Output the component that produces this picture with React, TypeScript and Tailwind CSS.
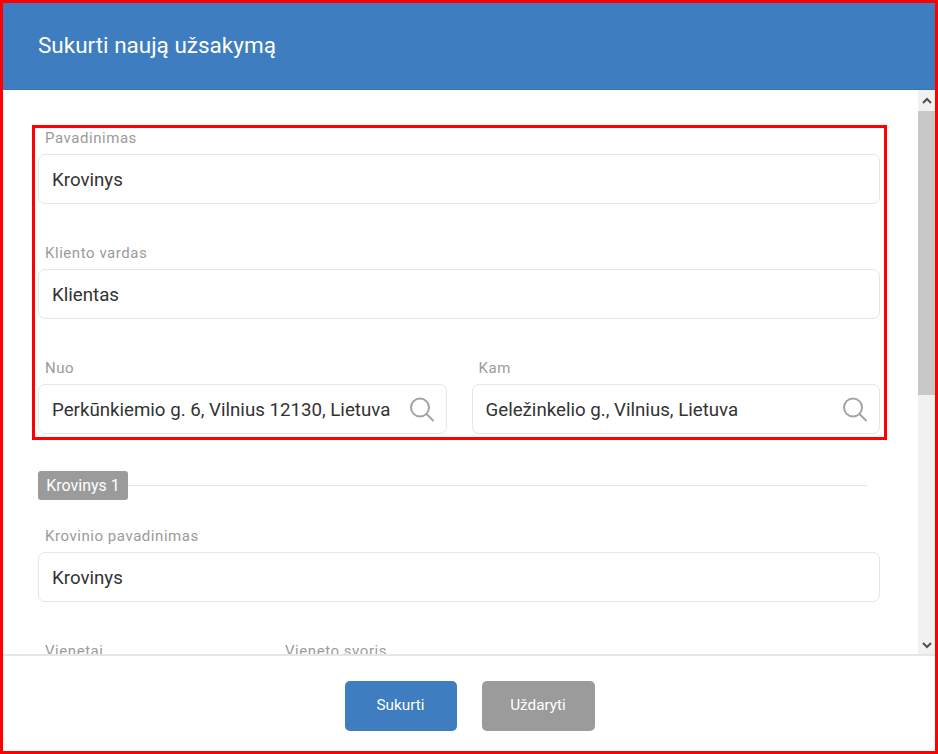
import React from 'react';

function SearchIcon() {
  return (
    <svg width="24" height="25" viewBox="0 0 24 25" fill="none" stroke="#a3a3a3" strokeWidth="2" className="shrink-0">
      <circle cx="10" cy="10.5" r="9" />
      <path d="M17 17.5l6 6" strokeLinecap="round" />
    </svg>
  );
}

function Field({ label, value, icon }: { label: string; value: string; icon?: boolean }) {
  return (
    <div className="flex-1 min-w-0">
      <label className="block pl-[7px] h-[28px] text-[15px] tracking-[0.55px] leading-[24px] text-[#9b9b9b]">{label}</label>
      <div className="flex items-center h-[50px] pl-[13px] pr-[12px] bg-white border border-[#e6e6e6] rounded-[7px]">
        <input
          readOnly
          value={value}
          className="flex-1 min-w-0 pt-[2px] bg-transparent outline-none text-[18.7px] text-[#333333]"
        />
        {icon && <SearchIcon />}
      </div>
    </div>
  );
}

export default function App() {
  return (
    <div className="relative flex flex-col h-[754px] w-[938px] overflow-hidden bg-white border-[3px] border-[#ff0000] font-['Roboto',sans-serif]">
      <header className="flex items-center h-[87px] shrink-0 pl-[35px] bg-[#3d7dc0] border-b border-[#3a75b3]">
        <h1 className="text-[22.5px] text-white">Sukurti naują užsakymą</h1>
      </header>

      <div className="flex flex-1 min-h-0">
        <div className="flex-1 min-w-0 overflow-hidden pt-[36px] pl-[35px] pr-[38px]">
          <div className="flex flex-col gap-[37px]">
            <Field label="Pavadinimas" value="Krovinys" />
            <Field label="Kliento vardas" value="Klientas" />
            <div className="flex gap-[25px]">
              <Field label="Nuo" value="Perkūnkiemio g. 6, Vilnius 12130, Lietuva" icon />
              <Field label="Kam" value="Geležinkelio g., Vilnius, Lietuva" icon />
            </div>
          </div>

          <div className="flex items-center mt-[37px] mr-[13px]">
            <span className="flex items-center justify-center w-[90px] h-[29px] rounded-[3px] bg-[#9b9b9b] text-[16px] text-white">Krovinys 1</span>
            <div className="flex-1 h-px bg-[#e6e6e6]" />
          </div>

          <div className="mt-[24px]">
            <Field label="Krovinio pavadinimas" value="Krovinys" />
          </div>

          <div className="flex gap-[25px] mt-[37px]">
            <div className="w-[215px]">
              <Field label="Vienetai" value="" />
            </div>
            <div className="w-[215px]">
              <Field label="Vieneto svoris" value="" />
            </div>
          </div>
        </div>

        {/* scrollbar */}
        <div className="flex flex-col w-[17px] shrink-0 bg-[#f1f1f1]">
          <div className="flex items-center justify-center h-[21px]">
            <svg width="10" height="7" viewBox="0 0 10 7" fill="none" stroke="#505050" strokeWidth="2">
              <path d="M1 6l4-4 4 4" />
            </svg>
          </div>
          <div className="h-[284px] bg-[#c8c8c8]" />
          <div className="flex-1" />
          <div className="flex items-center justify-center h-[17px]">
            <svg width="10" height="7" viewBox="0 0 10 7" fill="none" stroke="#505050" strokeWidth="2">
              <path d="M1 1l4 4 4-4" />
            </svg>
          </div>
        </div>
      </div>

      <footer className="flex items-center justify-center gap-[25px] h-[97px] shrink-0 pt-[4px] pl-[1px] bg-white border-t-2 border-[#e6e6e6]">
        <button className="w-[112px] h-[50px] rounded-[5px] bg-[#3d7dc0] text-[15.3px] text-white">Sukurti</button>
        <button className="w-[113px] h-[50px] rounded-[5px] bg-[#9b9b9b] text-[15.3px] text-white">Uždaryti</button>
      </footer>

      {/* annotation frame over the first fields */}
      <div className="absolute left-[29px] top-[122px] w-[855px] h-[315px] border-[3px] border-[#ff0000] pointer-events-none" />
    </div>
  );
}
